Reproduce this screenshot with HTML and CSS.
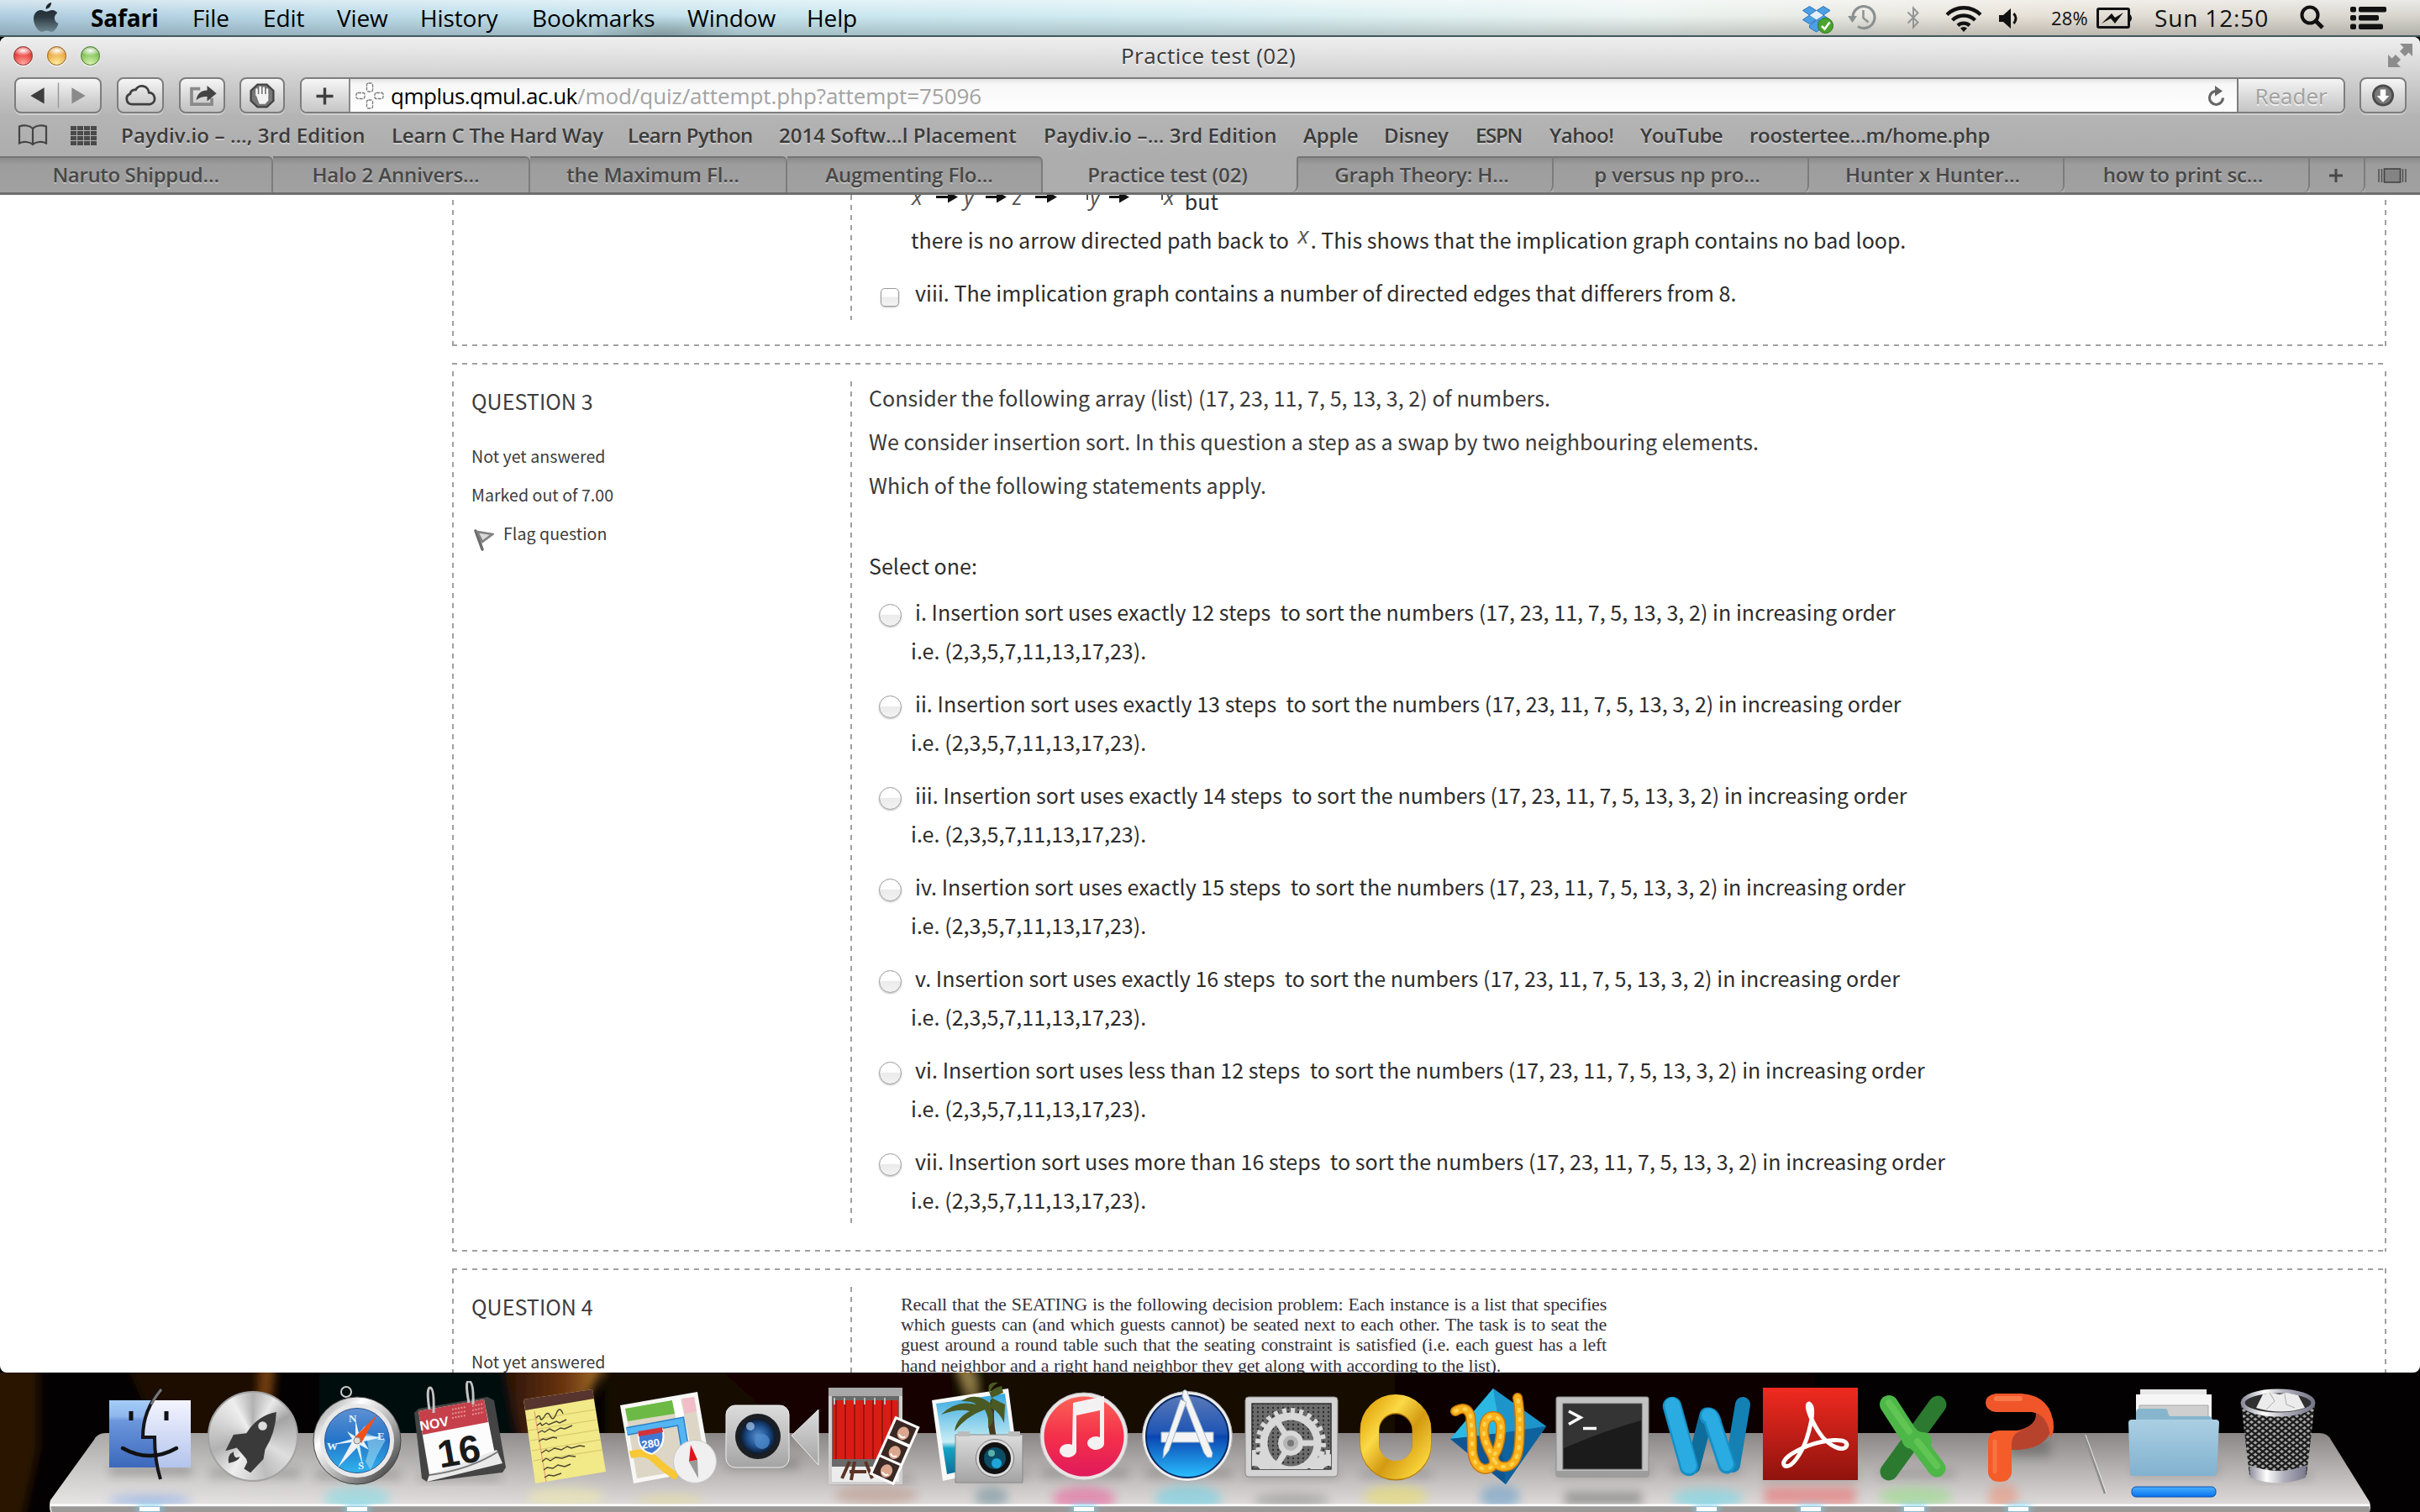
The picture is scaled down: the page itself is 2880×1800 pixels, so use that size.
FILE: index.html
```html
<!DOCTYPE html>
<html lang="en">
<head>
<meta charset="utf-8">
<title>Practice test (02)</title>
<link rel="stylesheet" href="styles.css">
</head>
<body>
<header class="menubar">
  <svg class="apple" viewBox="0 0 30 36"><defs><linearGradient id="ap" x1="0" y1="0" x2="0" y2="1"><stop offset="0" stop-color="#1c2226"/><stop offset=".5" stop-color="#2c3a42"/><stop offset="1" stop-color="#6f8790"/></linearGradient></defs><path fill="url(#ap)" d="M21 0c.4 3.600-2.600 7.600-6.400 7.700C14.200 4 17.400.6 21 0zM28.300 12.500c-5 3-4.300 10.300 1.200 12.600C28 29.700 24.800 35 21.600 35c-2.400 0-3.300-1.500-6-1.500-2.800 0-3.800 1.500-6 1.500C5.600 35 0 26.500 0 19.500 0 12.600 4.300 9 8.600 9c2.700 0 4.700 1.800 6.700 1.800C17 10.800 19.400 9 22.500 9c2 0 4.300 1.200 5.800 3.500z"/></svg>
  <nav class="menus"><b>Safari</b><span>File</span><span>Edit</span><span>View</span><span>History</span><span>Bookmarks</span><span>Window</span><span>Help</span></nav>
  <div class="status">
    <svg class="s-box" viewBox="0 0 38 34"><g fill="#4c9fe3" stroke="#2b74bd" stroke-width="1"><path d="M9.500 1.500l8 5-8 5.500-8-5.500zM26 1.500l8 5-8 5.500-8-5.500zM9.500 12l8 5.500-8 5-8-5zM26 12l8 5.500-8 5-8-5z"/><path d="M9.500 24l8-5.500 8 5.500v3l-8 5-8-5z"/></g><path d="M17.700 7l8 5.200-8 5.300-8-5.300z" fill="#e3f1fc"/><circle cx="28.500" cy="24.500" r="9" fill="#4aa32d" stroke="#2e7a18"/><path d="M24 25l3.500 3.500 6-8" fill="none" stroke="#fff" stroke-width="2.600"/></svg>
    <svg class="s-clock" viewBox="0 0 34 34"><g fill="none" stroke="#8b9090" stroke-width="3.200"><path d="M6 17A13 13 0 1 1 12 27.500"/><path d="M18.500 8v9.500l6 5" stroke-width="2.400"/></g><path d="M0 15h11l-5.500 8z" fill="#8b9090"/></svg>
    <svg class="s-bt" viewBox="0 0 16 28"><path d="M1.500 7.500l12 12L8 25.500v-23l5.500 6-12 12" fill="none" stroke="#909494" stroke-width="1.900"/></svg>
    <svg class="s-wifi" viewBox="0 0 44 32"><g fill="none" stroke="#111" stroke-width="4.400"><path d="M2 11.500a28.500 28.500 0 0 1 40 0"/><path d="M8.500 18a19.500 19.500 0 0 1 27 0"/><path d="M15 24.300a10.500 10.500 0 0 1 14 0"/></g><path d="M18 27.500a6 6 0 0 1 8 0l-4 4.500z" fill="#111"/></svg>
    <svg class="s-vol" viewBox="0 0 24 24"><path d="M0 8h5l9-8v24l-9-8H0z" fill="#111"/><path d="M17.500 6q5 6 0 12" fill="none" stroke="#111" stroke-width="3"/></svg>
    <span class="pct">28%</span>
    <svg class="s-bat" viewBox="0 0 44 25"><rect x="1.500" y="1.500" width="37" height="22" rx="1.500" fill="none" stroke="#111" stroke-width="3"/><path d="M40 8q4 4.500 0 9z" fill="#111"/><path d="M6 19L18 7l4 5 10-6-10 13-5-6z" fill="#111"/></svg>
    <span class="time">Sun 12:50</span>
    <svg class="s-find" viewBox="0 0 30 30"><circle cx="12" cy="12" r="9.500" fill="none" stroke="#111" stroke-width="4"/><path d="M18.500 18.500l8.500 8.500" stroke="#111" stroke-width="5"/></svg>
    <svg class="s-list" viewBox="0 0 43 27"><g fill="#111"><rect width="7" height="6.500" rx="2"/><rect y="10" width="7" height="6.500" rx="2"/><rect y="20.500" width="7" height="6.500" rx="2"/><rect x="10" width="33" height="6.500" rx="2"/><rect x="10" y="10" width="24" height="6.500" rx="2"/><rect x="10" y="20.500" width="29" height="6.500" rx="2"/></g></svg>
  </div>
</header>
<main class="window">
  <div class="chrome">
    <div class="titlebar">
      <div class="lights"><i class="red"></i><i class="amber"></i><i class="green"></i></div>
      <div class="title">Practice test (02)</div>
      <svg class="full" viewBox="0 0 30 30"><path d="M14 1h15v15l-4.500-4.500-4.500 4.500-6-6L18.500 5.500z" fill="#8c8c8c"/><path d="M0 14l4.500 4.500L9 14l6 6-4.500 4.500L15 29H0z" fill="#8c8c8c"/></svg>
    </div>
    <div class="toolbar">
      <div class="btn nav"><svg viewBox="0 0 104 43"><path d="M35 12v20L18 22z" fill="#3d3d3d"/><path d="M52.500 6v31" stroke="#999" stroke-width="1.500"/><path d="M69 12v20l17-10z" fill="#8a8a8a"/></svg></div>
      <div class="btn cloud"><svg viewBox="0 0 56 43"><path d="M17 33a7 7 0 0 1-2-13.500 6 6 0 0 1 7-5 9 9 0 0 1 17 3.500 7.600 7.600 0 0 1 1.500 15z" fill="none" stroke="#3f3f3f" stroke-width="3"/></svg></div>
      <div class="btn share"><svg viewBox="0 0 55 43"><path d="M25 13H14v20h26v-8" fill="none" stroke="#8a8a8a" stroke-width="4"/><path d="M20 28c1-9 7-13 14-13V9l12 10-12 10v-6c-6 0-10 1-14 5z" fill="#444"/></svg></div>
      <div class="btn stop"><svg viewBox="0 0 54 43"><path d="M21 7.500h12l8.500 8v13l-8.500 8H21l-8.500-8v-13z" fill="#777" stroke="#444" stroke-width="2.500"/><path d="M20 21v-7m4.500 7V11m4.500 10V12m4.500 10v-8" stroke="#fff" stroke-width="2.600" stroke-linecap="round"/><path d="M18.700 20h16.200v8l-4 4.500h-7.500z" fill="#f2f2f2"/></svg></div>
      <div class="address">
        <div class="plus"><svg viewBox="0 0 59 43"><path d="M29.500 12.500v20M19.500 22.500h20" stroke="#3f3f3f" stroke-width="3.400"/></svg></div>
        <svg class="fav" viewBox="0 0 34 34"><g fill="#fff" stroke="#777" stroke-width="1.300" stroke-dasharray="4 1"><rect x="13.500" y="2" width="7" height="10" rx="2"/><rect x="13.500" y="22" width="7" height="10" rx="2"/><rect x="1" y="13.500" width="10" height="7" rx="2"/><rect x="23" y="13.500" width="10" height="7" rx="2"/></g></svg>
        <div class="url"><span class="host">qmplus.qmul.ac.uk</span><span class="path">/mod/quiz/attempt.php?attempt=75096</span></div>
        <svg class="reload" viewBox="0 0 22 26"><path d="M12 6.500a8 8 0 1 0 7.500 8" fill="none" stroke="#666" stroke-width="3.200"/><path d="M10 0l9 6.500-9 6z" fill="#666"/></svg>
        <div class="reader">Reader</div>
      </div>
      <div class="btn down"><svg viewBox="0 0 56 43"><circle cx="28" cy="21.500" r="12.500" fill="#777" stroke="#4b4b4b" stroke-width="3"/><path d="M24.500 14h7v8h4.500l-8 8.500-8-8.500h4.500z" fill="#fff"/></svg></div>
    </div>
    <div class="bookmarks">
      <svg class="book" viewBox="0 0 36 26"><path d="M18 5C14 1 7 .5 2 2.500v20C7 20 14 20.500 18 24c4-3.500 11-4 16-1.500v-20C29 .5 22 1 18 5zm0 0v19" fill="none" stroke="#444" stroke-width="2.200"/></svg>
      <div class="grid4"></div>
      <div class="marks"><span>Paydiv.io – …, 3rd Edition</span><span>Learn C The Hard Way</span><span>Learn Python</span><span>2014 Softw…l Placement</span><span>Paydiv.io –… 3rd Edition</span><span>Apple</span><span>Disney</span><span>ESPN</span><span>Yahoo!</span><span>YouTube</span><span>roostertee…m/home.php</span></div>
    </div>
    <div class="tabs">
      <div class="tab left first">Naruto Shippud…</div><div class="tab left">Halo 2 Annivers…</div><div class="tab left">the Maximum Fl…</div><div class="tab left">Augmenting Flo…</div><div class="tab active">Practice test (02)</div><div class="tab right">Graph Theory: H…</div><div class="tab right">p versus np pro…</div><div class="tab right">Hunter x Hunter…</div><div class="tab right">how to print sc…</div>
      <div class="tab right add"><svg viewBox="0 0 20 20"><path d="M10 2v16M2 10h16" stroke="#484848" stroke-width="3"/></svg></div>
      <div class="tab all"><svg viewBox="0 0 34 18"><path d="M1 1v16M4.500 1v16M29.500 1v16M33 1v16" stroke="#555" stroke-width="1.600"/><rect x="7.500" y="1" width="19" height="16" fill="#848484" stroke="#444" stroke-width="1.600"/></svg></div>
    </div>
  </div>
  <div class="page">
    <section class="q q2">
      <div class="info"></div>
      <div class="body">
        <div class="line math"><svg viewBox="0 0 320 34"><g fill="#555" class="mt"><text x="1" y="22">x</text><text x="63" y="22">y</text><text x="121" y="22">z</text><text x="213" y="22">y</text><text x="301" y="22">x</text></g><path d="M202 9h8v7M291 9h8v7" fill="none" stroke="#555" stroke-width="2"/><path d="M30 12.500h18M89 12.500h16M148 12.500h18M236 12.500h16" stroke="#111" stroke-width="3"/><path d="M44 6l12 6.500-12 7zM102 6l12 6.500-12 7zM162 6l12 6.500-12 7zM248 6l12 6.500-12 7z" fill="#111"/></svg> but</div>
        <div class="line">there is no arrow directed path back to <i class="var">x</i>. This shows that the implication graph contains no bad loop.</div>
        <div class="opt last"><i class="check"></i><p>viii. The implication graph contains a number of directed edges that differers from 8.</p></div>
      </div>
    </section>
    <section class="q q3">
      <div class="info">
        <h3>QUESTION 3</h3>
        <p>Not yet answered</p>
        <p>Marked out of 7.00</p>
        <p class="flag"><svg viewBox="0 0 24 28"><path d="M2 3l8 22" stroke="#6b6b6b" stroke-width="3.500" stroke-linecap="round"/><path d="M4 4l18 3-12 9z" fill="#d8d8d8" stroke="#808080" stroke-width="2.600"/></svg>Flag question</p>
      </div>
      <div class="body">
        <p class="para">Consider the following array (list) (17, 23, 11, 7, 5, 13, 3, 2) of numbers.</p>
        <p class="para">We consider insertion sort. In this question a step as a swap by two neighbouring elements.</p>
        <p class="para">Which of the following statements apply.</p>
        <p class="prompt">Select one:</p>
        <div class="opt"><i class="radio"></i><p>i. Insertion sort uses exactly 12 steps&nbsp; to sort the numbers (17, 23, 11, 7, 5, 13, 3, 2) in increasing order<br>i.e. (2,3,5,7,11,13,17,23).</p></div>
        <div class="opt"><i class="radio"></i><p>ii. Insertion sort uses exactly 13 steps&nbsp; to sort the numbers (17, 23, 11, 7, 5, 13, 3, 2) in increasing order<br>i.e. (2,3,5,7,11,13,17,23).</p></div>
        <div class="opt"><i class="radio"></i><p>iii. Insertion sort uses exactly 14 steps&nbsp; to sort the numbers (17, 23, 11, 7, 5, 13, 3, 2) in increasing order<br>i.e. (2,3,5,7,11,13,17,23).</p></div>
        <div class="opt"><i class="radio"></i><p>iv. Insertion sort uses exactly 15 steps&nbsp; to sort the numbers (17, 23, 11, 7, 5, 13, 3, 2) in increasing order<br>i.e. (2,3,5,7,11,13,17,23).</p></div>
        <div class="opt"><i class="radio"></i><p>v. Insertion sort uses exactly 16 steps&nbsp; to sort the numbers (17, 23, 11, 7, 5, 13, 3, 2) in increasing order<br>i.e. (2,3,5,7,11,13,17,23).</p></div>
        <div class="opt"><i class="radio"></i><p>vi. Insertion sort uses less than 12 steps&nbsp; to sort the numbers (17, 23, 11, 7, 5, 13, 3, 2) in increasing order<br>i.e. (2,3,5,7,11,13,17,23).</p></div>
        <div class="opt"><i class="radio"></i><p>vii. Insertion sort uses more than 16 steps&nbsp; to sort the numbers (17, 23, 11, 7, 5, 13, 3, 2) in increasing order<br>i.e. (2,3,5,7,11,13,17,23).</p></div>
      </div>
    </section>
    <section class="q q4">
      <div class="info"><h3>QUESTION 4</h3><p>Not yet answered</p></div>
      <div class="body">
        <div class="tex"><p>Recall that the SEATING is the following decision problem: Each instance is a list that specifies</p><p>which guests can (and which guests cannot) be seated next to each other. The task is to seat the</p><p>guest around a round table such that the seating constraint is satisfied (i.e. each guest has a left</p><p class="end">hand neighbor and a right hand neighbor they get along with according to the list).</p></div>
      </div>
    </section>
  </div>
</main>
<footer class="dock">
  <svg class="shelf" viewBox="0 0 2880 166">
    <defs>
      <linearGradient id="sh" x1="0" y1="0" x2="0" y2="1"><stop offset="0" stop-color="#8a8686"/><stop offset=".5" stop-color="#bab6b6"/><stop offset="1" stop-color="#e6e3e1"/></linearGradient>
      <linearGradient id="sl" x1="0" y1="0" x2="1" y2="0"><stop offset="0" stop-color="#fff" stop-opacity=".3"/><stop offset=".25" stop-color="#fff" stop-opacity="0"/></linearGradient>
      <linearGradient id="wood" x1="0" y1="0" x2="1" y2="0"><stop offset="0" stop-color="#2a1404"/><stop offset=".6" stop-color="#6a3410"/><stop offset="1" stop-color="#a8742c"/></linearGradient>
      <filter id="bl"><feGaussianBlur stdDeviation="6"/></filter>
    </defs>
    <rect width="2880" height="166" fill="#030101"/>
    <g filter="url(#bl)">
      <path d="M-20-20h66v110l-20 90h-46z" fill="#2b1604"/>
      <path d="M150-10h180l-10 90H190z" fill="#1e0f04"/><path d="M312-10h14l-6 60h-12z" fill="#7a4213"/>
      <path d="M380-10h230v90H380z" fill="#05070a"/>
      <path d="M600-10h120l-30 60-20 40h-50z" fill="url(#wood)"/>
      <path d="M720-10h430v90H720z" fill="#190b04"/><path d="M1140-10h14l14 40-10 10z" fill="#a08a50"/>
      <path d="M850-10h280l10 90h-190z" fill="#120404"/>
      <path d="M1160-10h500v90h-500z" fill="#170a02"/><path d="M1660-10h500v90h-500z" fill="#0b0200"/>
    </g>
    <path d="M126 72H2760q10 0 14 8l46 74q2 6 0 12H60q-2-8 0-14L112 80q4-8 14-8z" fill="url(#sh)"/>
    <path d="M126 72H2760q10 0 14 8l46 74q2 6 0 12H60q-2-8 0-14L112 80q4-8 14-8z" fill="url(#sl)"/>
    <path d="M60 158H2820v8H62z" fill="#9b9997"/><path d="M60 158H2820" stroke="#fff" stroke-width="2.500"/>
    <g filter="url(#bl)" opacity=".45">
      <ellipse cx="178" cy="152" rx="50" ry="6" fill="#5a8ff0"/><ellipse cx="425" cy="150" rx="40" ry="14" fill="#66dbe8"/><ellipse cx="673" cy="148" rx="46" ry="12" fill="#f4efa0"/><ellipse cx="797" cy="152" rx="40" ry="6" fill="#e9de80"/><ellipse cx="1043" cy="146" rx="50" ry="12" fill="#b58878"/><ellipse cx="1180" cy="148" rx="20" ry="12" fill="#55808e"/><ellipse cx="1290" cy="150" rx="38" ry="14" fill="#f0408a"/><ellipse cx="1414" cy="150" rx="40" ry="16" fill="#50d0ea"/><ellipse cx="1537" cy="152" rx="46" ry="8" fill="#777"/><ellipse cx="1661" cy="148" rx="38" ry="14" fill="#efe14c"/><ellipse cx="1785" cy="148" rx="24" ry="14" fill="#4a90c8"/><rect x="1862" y="142" width="92" height="16" fill="#555"/><ellipse cx="2032" cy="150" rx="42" ry="12" fill="#50d8ee"/><rect x="2100" y="136" width="108" height="22" fill="#f05050"/><ellipse cx="2280" cy="148" rx="44" ry="12" fill="#80e070"/><ellipse cx="2384" cy="148" rx="18" ry="16" fill="#f08060"/>
    </g>
    <path d="M60 158H2820v8H62z" fill="#9b9997"/><path d="M60 158H2820" stroke="#fff" stroke-width="2.500"/>
    <g filter="url(#bl)" fill="#222" opacity=".28"><path d="M130 112h98v10h-98zM250 116h106v8H250zM376 118h100v8H376zM500 122h96v6h-96zM866 104h84v10h-84zM990 124h96v6h-96zM1144 118h80v6h-80zM1240 116h102v8h-102zM1364 116h102v8h-102zM1482 116h110v8h-110zM1620 118h84v6h-84zM1854 114h110v8h-110zM1990 112h80v8h-80zM2100 120h110v6h-110zM2236 118h90v6h-90zM2390 80h50v20h-50zM2538 112h102v8h-102zM2680 120h70v6h-70z"/></g>
  </svg>
  <div class="icons">
    <div class="app run"><svg viewBox="-62 0 124 150"><defs><linearGradient id="f1" x1="0" y1="0" x2="0" y2="1"><stop offset="0" stop-color="#a5cdf6"/><stop offset=".24" stop-color="#8fb7ee"/><stop offset=".3" stop-color="#6c97dd"/><stop offset="1" stop-color="#3c68bb"/></linearGradient><linearGradient id="f2" x1="0" y1="0" x2="0" y2="1"><stop offset="0" stop-color="#f4f4ff"/><stop offset="1" stop-color="#b3c4ec"/></linearGradient></defs><rect x="-48" y="23" width="97" height="80" fill="url(#f1)"/><path d="M4 23h45v80H7L6 67h-14Q-10 40 4 23z" fill="url(#f2)"/><path d="M14 10Q-8 34-8 67H6Q6 95 13 117" fill="none" stroke="#15151a" stroke-width="4"/><path d="M14 10Q6 20 2 28" stroke="#777" stroke-width="3" fill="none"/><path d="M-22 36v11M20 36v11" stroke="#111" stroke-width="5"/><path d="M-32 80Q0 98 32 80" fill="none" stroke="#111" stroke-width="4.500" stroke-linecap="round"/></svg></div>
    <div class="app"><div class="disc"><svg viewBox="-54 -54 108 108"><path d="M29-30Q6-26-8-4l-16 2-10 20 14-4 12 14 1 4-4 8 8 5 16-17 2-12Q28-4 29-30z" fill="#3a3a3a"/><circle cx="12" cy="-13" r="5.500" fill="#ddd"/><path d="M-24 19q-8 4-6 14 12-2 14-8-8 4-8-6z" fill="#3a3a3a"/></svg></div></div>
    <div class="app run"><svg viewBox="-62 0 124 150"><defs><linearGradient id="sr" x1="0" y1="0" x2="1" y2="1"><stop offset="0" stop-color="#777"/><stop offset=".3" stop-color="#fff"/><stop offset=".6" stop-color="#aaa"/><stop offset="1" stop-color="#222"/></linearGradient><linearGradient id="sb" x1="0" y1="0" x2="0" y2="1"><stop offset="0" stop-color="#5f90d4"/><stop offset=".5" stop-color="#2474c8"/><stop offset="1" stop-color="#2fb4ee"/></linearGradient></defs><circle cx="-13" cy="13" r="6" fill="none" stroke="#ccc" stroke-width="2"/><circle cy="71" r="52" fill="url(#sr)" stroke="#444"/><circle cy="71" r="44" fill="#e8e8e8"/><circle cy="71" r="38.500" fill="url(#sb)" stroke="#2a5590"/><path d="M10 62l24 8-10 18-8 18-6-10 4-14z" fill="#9ad8f4" opacity=".6"/><path d="M-2 46l4 16 8-9-4 12 24 2-22 5 6 10-11-6 4 26-8-25-9 6 4-10-24 3 24-7-6-9 10 6z" fill="#dff2fb"/><path d="M24 40L5 74l-8-7z" fill="#f0511b"/><path d="M-23 103L-3 67l8 7z" fill="#f2f2f2"/><circle cy="71" r="4" fill="#ddd" stroke="#888"/><g class="cmp"><text x="-10" y="49">N</text><text x="24" y="70">E</text><text x="1" y="105">S</text><text x="-36" y="82">W</text></g></svg></div>
    <div class="app"><svg viewBox="-62 0 124 150"><path d="M-55 38l5-5 82-14 8 4 14 80-4 6-90 11-6-4z" fill="#444"/><path d="M-50 36l78-14 15 75-80 15z" fill="#fcfcfc"/><path d="M-50 36l78-14 5 27-78 15z" fill="#c5404a"/><path d="M-37 112l80-30 7 16-90 22z" fill="#e9e9e9"/><path d="M-37 112Q10 106 45 84" stroke="#777" fill="none" stroke-width="2"/><path d="M-37 34q-4-26 1-26 5 1 4 30M10 26Q5 0 10 0q6 1 5 28" fill="none" stroke="#c4c4c4" stroke-width="3"/><path d="M-10 34l16-3m-16 8l16-3m-16 8l16-3M14 30l14-3m-14 8l14-3m-14 8l14-3" stroke="#e58f92" stroke-width="2" stroke-dasharray="2 1.500"/><g transform="rotate(-10)"><text x="-57" y="50" class="nov">NOV</text><text x="-42" y="98" class="day">16</text></g></svg></div>
    <div class="app"><svg viewBox="-62 0 124 150"><path d="M-49 22l82-12 16 98-84 14z" fill="#f2e988"/><path d="M-49 22l82-12 2 11-82 14z" fill="#57352e"/><g stroke="#d2c66a" stroke-width="1"><path d="M-45 47l82-13m-80 25l82-13m-80 25l82-13m-80 25l82-13m-80 25l82-13"/></g><path d="M-36 36l14 84" stroke="#e9a177" stroke-width="1.300"/><path d="M-34 44q4-5 5 0t5-2 7 0 7-3 8 0M-33 53l4-3 2 3 5-3 3 2 9-4 4 2 8-4M-32 62l5-3 3 2 6-4 6 3 7-4 5 1 9-4M-31 72l5-3 4 1 8-3 5 1M-28 86l6-4 3 2 7-4 8 2 7-4 5 2 10-3 6 1M-27 96l5-4 5 3 6-4 8 1 8-3 8 1M-25 106l4-3 7 1 6-4 8 2 7-3M-24 115l5-3 6 1 9-3" fill="none" stroke="#4b4630" stroke-width="1.400"/></svg></div>
    <div class="app"><svg viewBox="-62 0 124 150"><path d="M-58 29l92-16 16 92-92 17z" fill="#f7f7f5"/><path d="M-52 33l82-14 14 83-82 14z" fill="#ddd6c6"/><path d="M-52 33l56-10 3 16-56 9z" fill="#6cba45"/><path d="M16 21l14-2 3 17-14 3z" fill="#f2bcc8"/><path d="M4 23l10-2 18 88-10 2z" fill="#fff"/><path d="M-50 60l64-12 10 60" fill="none" stroke="#2f7fc4" stroke-width="10"/><path d="M-50 60l64-12 10 60" fill="none" stroke="#53b6f3" stroke-width="7"/><path d="M-46 88q18-6 30 6t26 20" fill="none" stroke="#f8c735" stroke-width="9"/><path d="M-36 62l28-5q6 20-12 30-18-4-16-25z" fill="#3f78d2" stroke="#fff" stroke-width="2"/><path d="M-37 60l29-5 1 6-29 5z" fill="#d0333c"/><text x="-32" y="79" class="hwy" transform="rotate(-9 -20 78)">280</text><circle cx="31" cy="96" r="25.500" fill="#f0f0f0" stroke="#c8c8c8"/><path d="M26 76l8 18-10 2z" fill="#e0141c"/><path d="M24 96l10-2 1 22z" fill="#999"/></svg></div>
    <div class="app"><svg viewBox="-62 0 124 150"><defs><linearGradient id="ft" x1="0" y1="0" x2="0" y2="1"><stop offset="0" stop-color="#dcdcdc"/><stop offset="1" stop-color="#a4a4a4"/></linearGradient><radialGradient id="ln"><stop offset="0" stop-color="#5a93cf"/><stop offset=".6" stop-color="#1f4f8e"/><stop offset="1" stop-color="#0b1a30"/></radialGradient></defs><rect x="-55" y="29" width="75" height="74" rx="11" fill="url(#ft)" stroke="#eee"/><path d="M23 65l32-31v66z" fill="url(#ft)" stroke="#eee"/><circle cx="-17" cy="66" r="27" fill="#1b1e22"/><circle cx="-17" cy="66" r="21" fill="url(#ln)"/><circle cx="-12" cy="72" r="9" fill="#4e8acb" opacity=".8"/><circle cx="-26" cy="54" r="5" fill="#a9cbee" opacity=".7"/></svg></div>
    <div class="app"><svg viewBox="-62 0 124 150"><path d="M-57 8h88v115h-88z" fill="#cfcfcf"/><path d="M-57 8h88v10h-88z" fill="#a8a8a8"/><path d="M-53 18h80v84h-80z" fill="#6a6a6a"/><path d="M-53 102h80v18h-80z" fill="#ececec"/><path d="M-52 23h78v70h-78z" fill="#d91d15"/><path d="M-48 23v70m11-70v70m11-70v70m11-70v70m11-70v70m11-70v70m11-70v70" stroke="#9d130e" stroke-width="2"/><path d="M-50 20v8m12-8v8m12-8v8m12-8v8m12-8v8m12-8v8" stroke="#bbb" stroke-width="2"/><path d="M-32 96l-9 20m28-20l8 20m-21-20l-4 22m-2-10h20" stroke="#5c3426" stroke-width="4" fill="none"/><g transform="rotate(24 22 82)"><rect x="6" y="45" width="32" height="76" fill="#fff"/><path d="M9 48h26v21H9zM9 73h26v21H9zM9 97h26v21H9z" fill="#3a2824"/><ellipse cx="23" cy="60" rx="7" ry="8" fill="#dba78e"/><ellipse cx="23" cy="85" rx="7" ry="8" fill="#dba78e"/><ellipse cx="23" cy="109" rx="7" ry="8" fill="#dba78e"/><path d="M19 63q4 4 8 0M19 88q4 4 8 0M19 112q4 4 8 0" stroke="#fff" stroke-width="2" fill="none"/></g></svg></div>
    <div class="app"><svg viewBox="-62 0 124 150"><defs><linearGradient id="ip" x1="0" y1="0" x2="0" y2="1"><stop offset="0" stop-color="#35a6e0"/><stop offset=".6" stop-color="#c8eef4"/><stop offset=".68" stop-color="#15a3c4"/><stop offset="1" stop-color="#0c6f9a"/></linearGradient></defs><path d="M-57 23l91-14 12 90-90 20z" fill="#f8f8f8"/><path d="M-52 27l82-12 11 78-80 18z" fill="url(#ip)"/><path d="M13 22q-8 36 6 60h6Q14 56 18 22z" fill="#4b371d"/><path d="M14 28Q-4 12-22 24q14 0 18 4-24-6-42 12 22-8 34-4-16 8-18 24 14-18 36-26 6 12 4 22 10-8 3-24 10 4 16 18l1-22-16-8 14-6-2-8q-10 2-14 8 2-8 10-12-18-2-8 18z" fill="#4b5a22"/><path d="M-29 64h80v57h-80z" fill="url(#ft)" stroke="#888"/><path d="M-26 60h14v6h-14zM34 60h14v6H34z" fill="#bbb"/><circle cx="18" cy="92" r="22.500" fill="#ddd" stroke="#777"/><circle cx="18" cy="92" r="19" fill="#111"/><circle cx="18" cy="92" r="13" fill="#0c4c66"/><circle cx="20" cy="98" r="6" fill="#1fa5d8"/><circle cx="14" cy="86" r="4" fill="#58b1a8"/></svg></div>
    <div class="app run"><svg viewBox="-62 0 124 150"><defs><linearGradient id="it" x1="0" y1="0" x2="0" y2="1"><stop offset="0" stop-color="#fc6158"/><stop offset=".5" stop-color="#f4304a"/><stop offset="1" stop-color="#e01a5c"/></linearGradient></defs><circle cy="66" r="52" fill="#e8e4e6" stroke="#bbb"/><circle cy="66" r="47.500" fill="url(#it)"/><path d="M-13 26l37-8v57a10 8 0 1 1-5-8V35l-28 6v42a10 8 0 1 1-5-7z" fill="#f4f1f2"/></svg></div>
    <div class="app"><svg viewBox="-62 0 124 150"><defs><linearGradient id="as" x1="0" y1="0" x2="0" y2="1"><stop offset="0" stop-color="#5a79b8"/><stop offset=".46" stop-color="#1e55b4"/><stop offset=".5" stop-color="#0a45b0"/><stop offset="1" stop-color="#2ac0ff"/></linearGradient></defs><circle cy="66" r="53.500" fill="#eee" stroke="#aaa"/><circle cy="66" r="49" fill="url(#as)" stroke="#0b2a62" stroke-width="2"/><g fill="#f4f4f4" stroke="#9fb4cc" stroke-width="1"><path d="M-31 61h62v12h-62z"/><path d="M-5 12q4-4 6 4l29 70-1 5-5 0-4-5L-6 18z"/><path d="M-8 22l7 3-21 58-7 9 1-11z"/></g></svg></div>
    <div class="app"><svg viewBox="-62 0 124 150"><defs><pattern id="dt" width="6" height="5" patternUnits="userSpaceOnUse"><rect width="6" height="5" fill="#6b6b6b"/><circle cx="2" cy="2" r="1.200" fill="#2d2d2d"/></pattern></defs><rect x="-55" y="19" width="110" height="95" rx="4" fill="#d4d4d4" stroke="#888"/><rect x="-47" y="27" width="94" height="78" fill="url(#dt)" stroke="#333" stroke-width="1.500"/><clipPath id="gc"><rect x="-47" y="27" width="94" height="78"/></clipPath><g clip-path="url(#gc)" fill="none" stroke="#d8d8d8"><circle cx="-1" cy="74" r="32" stroke-width="9"/><circle cx="-1" cy="74" r="39" stroke-width="6" stroke-dasharray="5 5.200"/><circle cx="-1" cy="74" r="12" fill="#b5b5b5" stroke-width="6"/><path d="M9 74h24M-7 64l-12-19M-7 84l-12 19" stroke-width="7"/><circle cx="-44" cy="108" r="14" stroke-width="14"/><circle cx="-44" cy="108" r="23" stroke-width="6" stroke-dasharray="5 4.500"/><circle cx="44" cy="108" r="14" stroke-width="14"/><circle cx="44" cy="108" r="23" stroke-width="6" stroke-dasharray="5 4.500"/></g><circle cx="-1" cy="74" r="4" fill="#777"/></svg></div>
    <div class="app"><svg viewBox="-62 0 124 150"><defs><linearGradient id="ou" x1="0" y1="0" x2="1" y2="1"><stop offset="0" stop-color="#e3a911"/><stop offset=".3" stop-color="#fbd946"/><stop offset=".6" stop-color="#d39a12"/><stop offset="1" stop-color="#fcd73d"/></linearGradient></defs><rect x="-30" y="28" width="62" height="79" rx="31" fill="none" stroke="#b57e0a" stroke-width="23"/><rect x="-30" y="27" width="62" height="79" rx="31" fill="none" stroke="url(#ou)" stroke-width="22"/><path d="M-16 34Q20 14 29 52q3 30-5 46-14 20-40 8 20 4 26-10 6-20 2-44-4-22-28-18z" fill="none"/></svg></div>
    <div class="app"><svg viewBox="-62 0 124 150"><path d="M-7 9L56 54 8 123-58 69z" fill="#167fb8"/><path d="M-7 9L56 54 2 62z" fill="#1d95ca"/><path d="M-7 9L2 62l-60 7z" fill="#2bb9e4"/><path d="M56 54L8 123 2 62z" fill="#0e639e"/><path d="M-58 69l60-7 6 61z" fill="#0f5591"/><g fill="none" stroke-linecap="round" stroke-linejoin="round"><path d="M-52 36q14-8 18 6 2 18 2 40 2 22 16 23 14-2 8-16-12-20-10-34 2-14 12-13 10 2 8 20-2 20-8 26-1 12 10 14 18 2 20-28Q26 40 22 20" stroke="#c9780a" stroke-width="12"/><path d="M-52 36q14-8 18 6 2 18 2 40 2 22 16 23 14-2 8-16-12-20-10-34 2-14 12-13 10 2 8 20-2 20-8 26-1 12 10 14 18 2 20-28Q26 40 22 20" stroke="#f9b21c" stroke-width="9"/><path d="M-52 36q14-8 18 6 2 18 2 40 2 22 16 23 14-2 8-16-12-20-10-34 2-14 12-13 10 2 8 20-2 20-8 26-1 12 10 14 18 2 20-28Q26 40 22 20" stroke="#ffd452" stroke-width="4" stroke-dasharray="2 9"/></g></svg></div>
    <div class="app"><svg viewBox="-62 0 124 150"><rect x="-55" y="19" width="110" height="95" rx="2" fill="#c2c2c2" stroke="#8a8a8a"/><rect x="-47" y="27" width="94" height="78" fill="#1b1b1b" stroke="#666"/><path d="M-46 80Q0 60 46 47V28h-92z" fill="#343434"/><path d="M-55 107h110v7h-110z" fill="#9d9d9d"/><path d="M-40 36l14 7.500-14 8" fill="none" stroke="#fff" stroke-width="3.600"/><path d="M-23 56.500h16" stroke="#fff" stroke-width="3.500"/></svg></div>
    <div class="app run"><svg viewBox="-62 0 124 150"><g fill="none" stroke-linecap="round"><path d="M-16 102L0 40" stroke="#0f6d9b" stroke-width="17"/><path d="M31 100L43 28" stroke="#1480b4" stroke-width="18"/><path d="M-41 30l20 72" stroke="#178fc4" stroke-width="22.500"/><path d="M-41 29l20 72" stroke="#2aabe2" stroke-width="18"/><path d="M2 42q4 0 6 10l16 48" stroke="#178fc4" stroke-width="21"/><path d="M2 41q4 0 6 10l16 48" stroke="#2aabe2" stroke-width="16"/></g></svg></div>
    <div class="app run"><svg viewBox="-62 0 124 150"><defs><linearGradient id="ac" x1="0" y1="0" x2="0" y2="1"><stop offset="0" stop-color="#f02a20"/><stop offset="1" stop-color="#8f130d"/></linearGradient></defs><rect x="-57" y="8" width="113" height="110" fill="url(#ac)"/><path d="M-2 27c6 3 4 20-3 42-6 17-18 36-26 32-6-6 8-16 28-24 20-7 45-10 46-1-2 10-22 3-34-16-9-14-16-32-11-33z" fill="none" stroke="#fff" stroke-width="5"/></svg></div>
    <div class="app run"><svg viewBox="-62 0 124 150"><g fill="none" stroke-linecap="round"><path d="M-30 108L28 28" stroke="#2c7a30" stroke-width="21"/><path d="M-30 28l22 34q8 10 18 10" stroke="#4db748" stroke-width="22"/><path d="M27 104L6 76q-6-6-10-6" stroke="#4db748" stroke-width="21"/><path d="M-30 26l24 34M27 101L4 72" stroke="#70cf5e" stroke-width="8" opacity=".6"/></g></svg></div>
    <div class="app run"><svg viewBox="-62 0 124 150"><path d="M20 34Q26 54-6 60l-4 22h10Q38 80 42 48z" fill="#b8432d"/><path d="M-27 15H4Q40 18 42 54 42 64 38 68 36 40 16 37h-43q-12-2-12-11t12-11z" fill="#f0562a"/><path d="M-36 74Q-36 59-22 59H4Q-8 62-8 76v34q-2 10-14 10t-14-10z" fill="#f45c2a"/><path d="M-26 21H2" stroke="#ff8a58" stroke-width="6" stroke-linecap="round" opacity=".7"/><path d="M-28 72v36" stroke="#ff8350" stroke-width="5" stroke-linecap="round" opacity=".6"/></svg></div>
    <svg class="sep" viewBox="0 0 30 80"><path d="M2 4l25 70" stroke="#8d8d8d" stroke-width="2.500"/><path d="M4 4l25 70" stroke="#e6e6e6" stroke-width="1"/></svg>
    <div class="app"><svg viewBox="-62 0 124 150"><defs><linearGradient id="fo" x1="0" y1="0" x2="0" y2="1"><stop offset="0" stop-color="#aacfe3"/><stop offset="1" stop-color="#82b1cf"/></linearGradient><linearGradient id="pl" x1="0" y1="0" x2="0" y2="1"><stop offset="0" stop-color="#48b0ff"/><stop offset="1" stop-color="#0672ec"/></linearGradient></defs><path d="M-40 10h79v20h-79z" fill="#e8e8e8"/><path d="M-45 16h90v50h-90z" fill="#f6f6f6"/><path d="M-41 29h82v30h-82z" fill="#cfcfcf" stroke="#a9a9a9"/><path d="M-45 38q0-5 4-5h30q4 0 4 5l2 4h46q5 0 5 5v10h-91z" fill="#88b5ce"/><path d="M-54 50q0-4 4-4H50q4 0 4 4l-3 60q0 3-3 3h-97q-3 0-3-3z" fill="url(#fo)"/><rect x="-50" y="126" width="100" height="12" rx="5" fill="url(#pl)" stroke="#0a4fae"/></svg></div>
    <div class="app"><svg viewBox="-62 0 124 150"><defs><pattern id="ms" width="9" height="7" patternUnits="userSpaceOnUse"><rect width="9" height="7" fill="#a5a5a5"/><path d="M0 0l9 7M9 0L0 7" stroke="#1c1c1c" stroke-width="2.300"/></pattern><linearGradient id="ch" x1="0" y1="0" x2="1" y2="0"><stop offset="0" stop-color="#8d8d9c"/><stop offset=".3" stop-color="#fff"/><stop offset=".6" stop-color="#b0b0bd"/><stop offset="1" stop-color="#77778a"/></linearGradient></defs><path d="M-44 26h88L34 112q-34 12-68 0z" fill="url(#ms)"/><path d="M-34 100q34 14 68 0l-1 15q-33 13-66 0z" fill="url(#ch)"/><ellipse cy="26" rx="42" ry="14" fill="#2f2f2f" stroke="url(#ch)" stroke-width="5"/><path d="M-26 32l8-16 10-2 10 2 8-2 14 3 8 15q-28 9-58 0z" fill="#ececec"/><path d="M-10 14l6 10-10 10M8 16l2 12 10 4" stroke="#aaa" fill="none"/></svg></div>
  </div>
</footer>
</body>
</html>
```
FILE: styles.css
```css
* { box-sizing: border-box; }
html, body { margin: 0; height: 100%; }
body {
  width: 2880px; height: 1800px; overflow: hidden; background: #030101;
  display: flex; flex-direction: column;
  font-family: "Open Sans", "Noto Sans", sans-serif; color: #111;
}
p, h3 { margin: 0; font-weight: 400; }
svg { display: block; flex: none; }

/* Menu bar */
.menubar {
  height: 44px; flex: none; display: flex; align-items: flex-start; padding-left: 40px;
  border-bottom: 2px solid #41585c;
  background:
    radial-gradient(ellipse 90px 26px at 790px 44px, rgba(90,110,110,.45), transparent),
    linear-gradient(to bottom, rgba(255,255,255,.55), rgba(255,255,255,.1) 45%, rgba(60,60,60,.22)),
    linear-gradient(to right, #a6c8dc 0, #b9dce9 600px, #cdeaf0 1400px, #e8f2ef 1950px, #e4ddd2 2400px, #d2d0c8 2880px);
}
.apple { width: 30px; height: 36px; margin-top: 3px; }
.menus {
  display: grid; grid-template-columns: 121px 84px 88px 99px 133px 185px 142px 80px;
  margin-left: 38px; font-size: 28px; line-height: 42px; letter-spacing: -.12px; color: #000;
}
.status { margin-left: auto; display: flex; height: 44px; color: #111; }
.s-box { width: 38px; height: 34px; margin: 6px 17px 0 0; }
.s-clock { width: 34px; height: 34px; margin: 4px 36px 0 0; }
.s-bt { width: 16px; height: 28px; margin: 7px 30px 0 0; }
.s-wifi { width: 44px; height: 32px; margin: 6px 20px 0 0; }
.s-vol { width: 24px; height: 24px; margin: 10px 38px 0 0; }
.pct { width: 54px; font-size: 22px; line-height: 42px; letter-spacing: .2px; }
.s-bat { width: 44px; height: 25px; margin: 9px 25px 0 0; }
.time { width: 173px; font-size: 28px; line-height: 42px; letter-spacing: .85px; }
.s-find { width: 30px; height: 30px; margin: 6px 30px 0 0; }
.s-list { width: 43px; height: 27px; margin: 8px 40px 0 0; }

/* Window */
.window { height: 1590px; flex: none; display: flex; flex-direction: column; border-radius: 8px; overflow: hidden; background: #fff; }
.chrome {
  height: 188px; flex: none;
  background: linear-gradient(#efefef, #d2d2d2 46px, #b4b4b4 94px, #adadad 142px, #acacac);
}
.titlebar { height: 48px; display: flex; align-items: center; padding: 0 8px 4px 16px; }
.lights { display: flex; gap: 17px; width: 1318px; }
.lights i { width: 23px; height: 23px; border-radius: 50%; border: 1.500px solid; box-shadow: 0 1px 1px #fff; }
.lights .red { background: radial-gradient(ellipse 60% 30% at 50% 20%, #fff, transparent), radial-gradient(circle at 50% 100%, #ffb0aa, #e8413d 60%, #c02a2a); border-color: #8c2a28; }
.lights .amber { background: radial-gradient(ellipse 60% 30% at 50% 20%, #fff, transparent), radial-gradient(circle at 50% 100%, #fff2a8, #ecac45 60%, #c98228); border-color: #94601c; }
.lights .green { background: radial-gradient(ellipse 60% 30% at 50% 20%, #fff, transparent), radial-gradient(circle at 50% 100%, #dcf7b4, #86c35c 60%, #5b9a3c); border-color: #467a2c; }
.title { font-size: 26px; line-height: 44px; letter-spacing: .44px; color: #3a3a3a; text-shadow: 0 2px 0 rgba(255,255,255,.6); }
.full { width: 30px; height: 30px; margin-left: auto; }
.toolbar { height: 43px; display: flex; padding-left: 17px; }
.btn, .address {
  height: 43px; border: 2px solid #7d7d7d; border-radius: 8px; box-shadow: 0 2px 0 rgba(255,255,255,.35);
  background: linear-gradient(#f6f6f6, #d4d4d4 60%, #c2c2c2);
}
.btn svg { width: 100%; height: 43px; margin-top: -2px; }
.nav { width: 104px; margin-right: 18px; }
.cloud { width: 56px; margin-right: 18px; }
.share { width: 55px; margin-right: 17px; }
.stop { width: 54px; margin-right: 18px; }
.address { width: 2434px; display: flex; overflow: hidden; background: linear-gradient(#e4e4e4, #f7f7f7 6px, #fff); }
.plus { width: 58px; border-right: 2px solid #8a8a8a; background: linear-gradient(#f6f6f6, #c6c6c6); }
.plus svg { width: 59px; height: 43px; margin: -2px 0 0 -2px; }
.fav { width: 34px; height: 34px; margin: 3px 8px 0 6px; }
.url { font-size: 26px; line-height: 40px; flex: 1; display: flex; }
.host { color: #000; letter-spacing: -.5px; width: 222px; }
.path { color: #a3a3a3; letter-spacing: -.07px; }
.reload { width: 22px; height: 26px; margin: 8px 14px 0 0; }
.reader { width: 127px; border-left: 2px solid #7d7d7d; text-align: center; font-size: 26px; line-height: 40px; color: #a2a2a2; text-shadow: 0 2px 0 rgba(255,255,255,.7); background: linear-gradient(#f4f4f4, #c4c4c4); }
.down { width: 56px; margin-left: 17px; }
.bookmarks { height: 51px; display: flex; padding-left: 21px; }
.book { width: 36px; height: 26px; margin: 13px 27px 0 0; }
.grid4 {
  width: 31px; height: 23px; margin: 15px 29px 0 0;
  background: repeating-linear-gradient(to bottom, transparent 0 5px, #afafaf 5px 6px), repeating-linear-gradient(to right, #4a4a4a 0 7px, #afafaf 7px 8px);
}
.marks {
  display: grid; grid-template-columns: 322px 281px 180px 315px 309px 96px 109px 88px 108px 130px 300px;
  white-space: nowrap; font-size: 24px; font-weight: 600; line-height: 51px; letter-spacing: -.2px; color: #3b3b3b;
  text-shadow: 0 2px 0 rgba(255,255,255,.4);
}
.marks span:nth-child(1), .marks span:nth-child(5) { letter-spacing: .14px; }
.marks span:nth-child(4) { letter-spacing: .04px; }
.marks span:nth-child(3), .marks span:nth-child(9), .marks span:nth-child(10) { letter-spacing: -.5px; }
.marks span:nth-child(8) { letter-spacing: -1.300px; }
.marks span:nth-child(11) { letter-spacing: -.3px; }
.tabs {
  height: 46px; display: grid; background: #adadad; border-bottom: 3px solid #6f6f6f;
  grid-template-columns: 325px 306px 306px 304px 304px 304px 304px 304px 292px 66px 65px;
}
.tab {
  padding-right: 12px; text-align: center; font-size: 24px; font-weight: 600; line-height: 40px; letter-spacing: -.1px; white-space: nowrap;
  color: #474747; text-shadow: 0 2px 0 rgba(255,255,255,.35);
  background: linear-gradient(#8b8b8b, #9d9d9d 8px, #a1a1a1); border-top: 2px solid #757575;
}
.left { border-right: 2px solid #7c7c7c; border-radius: 0 6px 0 0; }
.right { border-right: 2px solid #7c7c7c; border-radius: 0 0 8px 0; padding-right: 8px; }
.first { padding-right: 0; letter-spacing: -.35px; }
.active { background: #adadad; border-top-color: #adadad; padding-right: 5px; border-right: 2px solid #777; border-radius: 0 0 8px 8px; }
.add svg { width: 20px; height: 20px; margin: 11px 0 0 21px; }
.all { padding: 0; }
.all svg { width: 34px; height: 18px; margin: 12px 0 0 15px; }

/* Quiz page */
.page {
  height: 1402px; overflow: hidden; padding: 0 40px 0 538px; display: flex; flex-direction: column; gap: 20px;
  font-family: "Noto Sans CJK SC", "Noto Sans", sans-serif; font-size: 25px; line-height: 46px; letter-spacing: .05px; color: #2c2c2c;
}
.q {
  --h: repeating-linear-gradient(to right, #a0a0a0 0 6px, transparent 6px 12px);
  --v: repeating-linear-gradient(to bottom, transparent 0 var(--p), #a0a0a0 var(--p) calc(var(--p) + 6px), transparent calc(var(--p) + 6px) 12px);
  flex: none; display: flex;
  background: var(--h) 0 0 / 100% 2px no-repeat, var(--h) 0 100% / 100% 2px no-repeat, var(--v) 0 0 / 2px 100% no-repeat, var(--v) 100% 0 / 2px 100% no-repeat;
}
.q2 { height: 180px; --p: 6px; background: var(--h) 0 100% / 100% 2px no-repeat, var(--v) 0 0 / 2px 100% no-repeat, var(--v) 100% 0 / 2px 100% no-repeat; }
.q3 { height: 1058px; --p: 6px; background-position: 0 0, 0 100%, 0 4px, 100% 4px; }
.q4 { height: 160px; --p: 0px; }
.info { width: 474px; padding: 22px 0 0 23px; font-size: 19.560px; color: #3c3c3c; flex: none; }
.info h3 { font-size: 25px; line-height: 46px; margin-bottom: 20px; color: #3c3c3c; }
.info p { height: 46px; white-space: nowrap; }
.flag { display: flex; }
.flag svg { width: 24px; height: 28px; margin: 17px 11px 0 3px; }
.body {
  flex: 1; padding-left: 22px; white-space: nowrap;
  background: repeating-linear-gradient(to bottom, #a0a0a0 0 6px, transparent 6px 12px) no-repeat;
}
.q2 .body { background-size: 2px 149px; background-position: 0 0; }
.q3 .body { background-size: 2px 1006px; background-position: 0 22px; padding-top: 18px; }
.q4 .body { background-size: 2px 200px; background-position: 0 22px; padding: 31px 0 0 60px; }
.line { padding-left: 50px; height: 46px; }
.math { margin-top: -16px; display: flex; white-space: pre; }
.math svg { width: 320px; height: 34px; margin: 6px 0 0 0; }
.math svg text { font-family: "Open Sans", sans-serif; font-style: italic; font-size: 27px; }
.var { font-family: "Open Sans", sans-serif; font-size: 27px; position: relative; top: -6px; color: #555; line-height: 20px; margin: 0 2px 0 5px; }
.para { margin-bottom: 6px; color: #3a3a3a; }
.prompt { margin: 50px 0 9px; }
.opt { display: flex; margin-bottom: 17px; }
.opt p { text-indent: 5px; }
.last { margin-top: 17px; }
.radio { width: 27px; height: 27px; margin: 14px 11px 0 12px; border: 1.500px solid #9a9a9a; border-radius: 50%; background: linear-gradient(#fff 45%, #ebebeb 50%, #f2f2f2); box-shadow: 0 1px 2px rgba(0,0,0,.25); flex: none; }
.check { width: 22px; height: 22px; margin: 18px 14px 0 14px; border: 1.500px solid #9a9a9a; border-radius: 5px; background: linear-gradient(#fff 45%, #ebebeb 50%, #f4f4f4); box-shadow: 0 1px 2px rgba(0,0,0,.25); flex: none; }
.tex { width: 840px; font: 22px/24.200px "Liberation Serif", serif; color: #34323c; }
.tex p { text-align-last: justify; white-space: normal; height: 24.200px; letter-spacing: -.2px; }
.tex p.end { width: 714px; }

/* Dock */
.dock { flex: 1; display: grid; }
.shelf, .icons { grid-area: 1 / 1; }
.shelf { width: 2880px; height: 166px; }
.icons { display: flex; padding-left: 116px; z-index: 1; height: 166px; }
.app { width: 123.550px; height: 166px; flex: none; padding-top: 10px; position: relative; display: flex; justify-content: center; }
.app > svg { width: 124px; height: 150px; }
.run::after { content: ""; position: absolute; bottom: 1px; left: 50px; width: 24px; height: 5px; background: #fff; box-shadow: 0 0 8px 2px #7fd4f4; }
.disc { width: 108px; height: 108px; margin-top: 12px; border-radius: 50%; border: 2px solid #a2a2a2; background: conic-gradient(#b2b2b2, #e9e9e9 30deg, #a4a4a4 60deg, #dedede 120deg, #bdbdbd 160deg, #efefef 210deg, #b1b1b1 250deg, #dadada 300deg, #eee 330deg, #b2b2b2); }
.sep { width: 30px; height: 80px; margin: 70px 17px 0 15px; }
.cmp text { font: bold 13px "Liberation Serif", serif; fill: #e8f4fd; }
.nov { font: bold 16px "Liberation Sans", sans-serif; fill: #fff; }
.day { font: bold 46px "Liberation Sans", sans-serif; fill: #1a1a1a; }
.hwy { font: bold 13px "Liberation Sans", sans-serif; fill: #fff; }
```
